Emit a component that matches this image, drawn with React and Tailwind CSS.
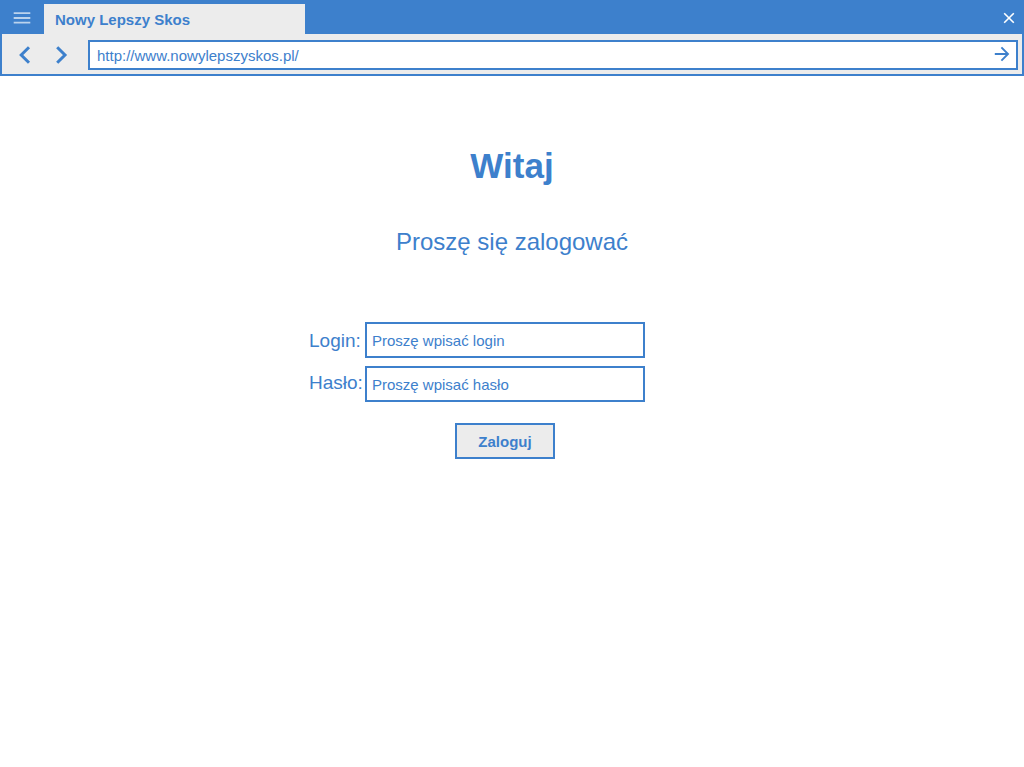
export default function App() {
  return (
    <div className="min-h-screen bg-white font-['Liberation_Sans',Arial,sans-serif] text-[#3d80cc]">
      <header className="border-b-2 border-[#3d80cc]">
        <div className="flex h-[34px] items-end bg-[#3d80cc]">
          <button aria-label="Menu" className="flex h-[34px] w-11 items-end justify-center pb-2.5 text-white/65">
            <svg width="18" height="12" viewBox="0 0 18 12" fill="none" stroke="currentColor" strokeWidth="1.8">
              <path d="M0.7 1.2H17.3M0.7 6H17.3M0.7 10.6H17.3" />
            </svg>
          </button>
          <div className="flex h-[30px] w-[261px] items-center bg-[#ececec] px-[11px] pt-0.5 text-[15px] font-bold">Nowy Lepszy Skos</div>
          <button aria-label="Close" className="ml-auto flex h-[34px] w-[30px] items-end justify-center pb-2.5 text-white">
            <svg width="12" height="12" viewBox="0 0 12 12" fill="none" stroke="currentColor" strokeWidth="1.6">
              <path d="M1.2 1.2L10.8 10.8M10.8 1.2L1.2 10.8" />
            </svg>
          </button>
        </div>
        <div className="flex items-center border-x-2 border-[#3d80cc] bg-[#ececec] pt-1.5 pr-1 pb-1">
          <div className="flex w-[86px] shrink-0 pl-[5px]">
            <button aria-label="Back" className="flex w-9 justify-center">
              <svg width="14" height="20" viewBox="0 0 14 20" fill="none" stroke="currentColor" strokeWidth="3"><path d="M11 2.2L3.2 10L11 17.8" /></svg>
            </button>
            <button aria-label="Forward" className="flex w-9 justify-center">
              <svg width="14" height="20" viewBox="0 0 14 20" fill="none" stroke="currentColor" strokeWidth="3"><path d="M3.2 2.2L11 10L3.2 17.8" /></svg>
            </button>
          </div>
          <form className="flex h-[30px] grow items-center border-2 border-[#3d80cc] bg-white" onSubmit={(e) => e.preventDefault()}>
            <input aria-label="Address" defaultValue="http://www.nowylepszyskos.pl/" className="min-w-0 grow px-[7px] pt-0.5 text-[15px] outline-none" />
            <button aria-label="Go" className="flex w-7 justify-center pb-0.5">
              <svg width="16" height="16" viewBox="0 0 16 16" fill="none" stroke="currentColor" strokeWidth="1.9"><path d="M0.8 8H14M7.4 1.4L14 8L7.4 14.6" /></svg>
            </button>
          </form>
        </div>
      </header>
      <main className="flex flex-col items-center pt-[70px]">
        <h1 className="text-[35px] leading-10 font-bold">Witaj</h1>
        <p className="mt-10 text-2xl">Proszę się zalogować</p>
        <form className="mt-16 mr-[70px] grid grid-cols-[56px_280px] items-center gap-y-2" onSubmit={(e) => e.preventDefault()}>
          <label htmlFor="login" className="pt-0.5 text-[19px] whitespace-nowrap">Login:</label>
          <input id="login" placeholder="Proszę wpisać login" className="h-9 border-2 border-[#3d80cc] px-[5px] text-[15px] placeholder:text-[#3d80cc]" />
          <label htmlFor="haslo" className="pb-0.5 text-[19px] whitespace-nowrap">Hasło:</label>
          <input id="haslo" type="password" placeholder="Proszę wpisać hasło" className="h-9 border-2 border-[#3d80cc] px-[5px] text-[15px] placeholder:text-[#3d80cc]" />
          <button className="col-start-2 mt-[13px] h-9 w-[100px] justify-self-center border-2 border-[#3d80cc] bg-[#ececec] pt-0.5 text-[15px] font-bold">Zaloguj</button>
        </form>
      </main>
    </div>
  );
}
